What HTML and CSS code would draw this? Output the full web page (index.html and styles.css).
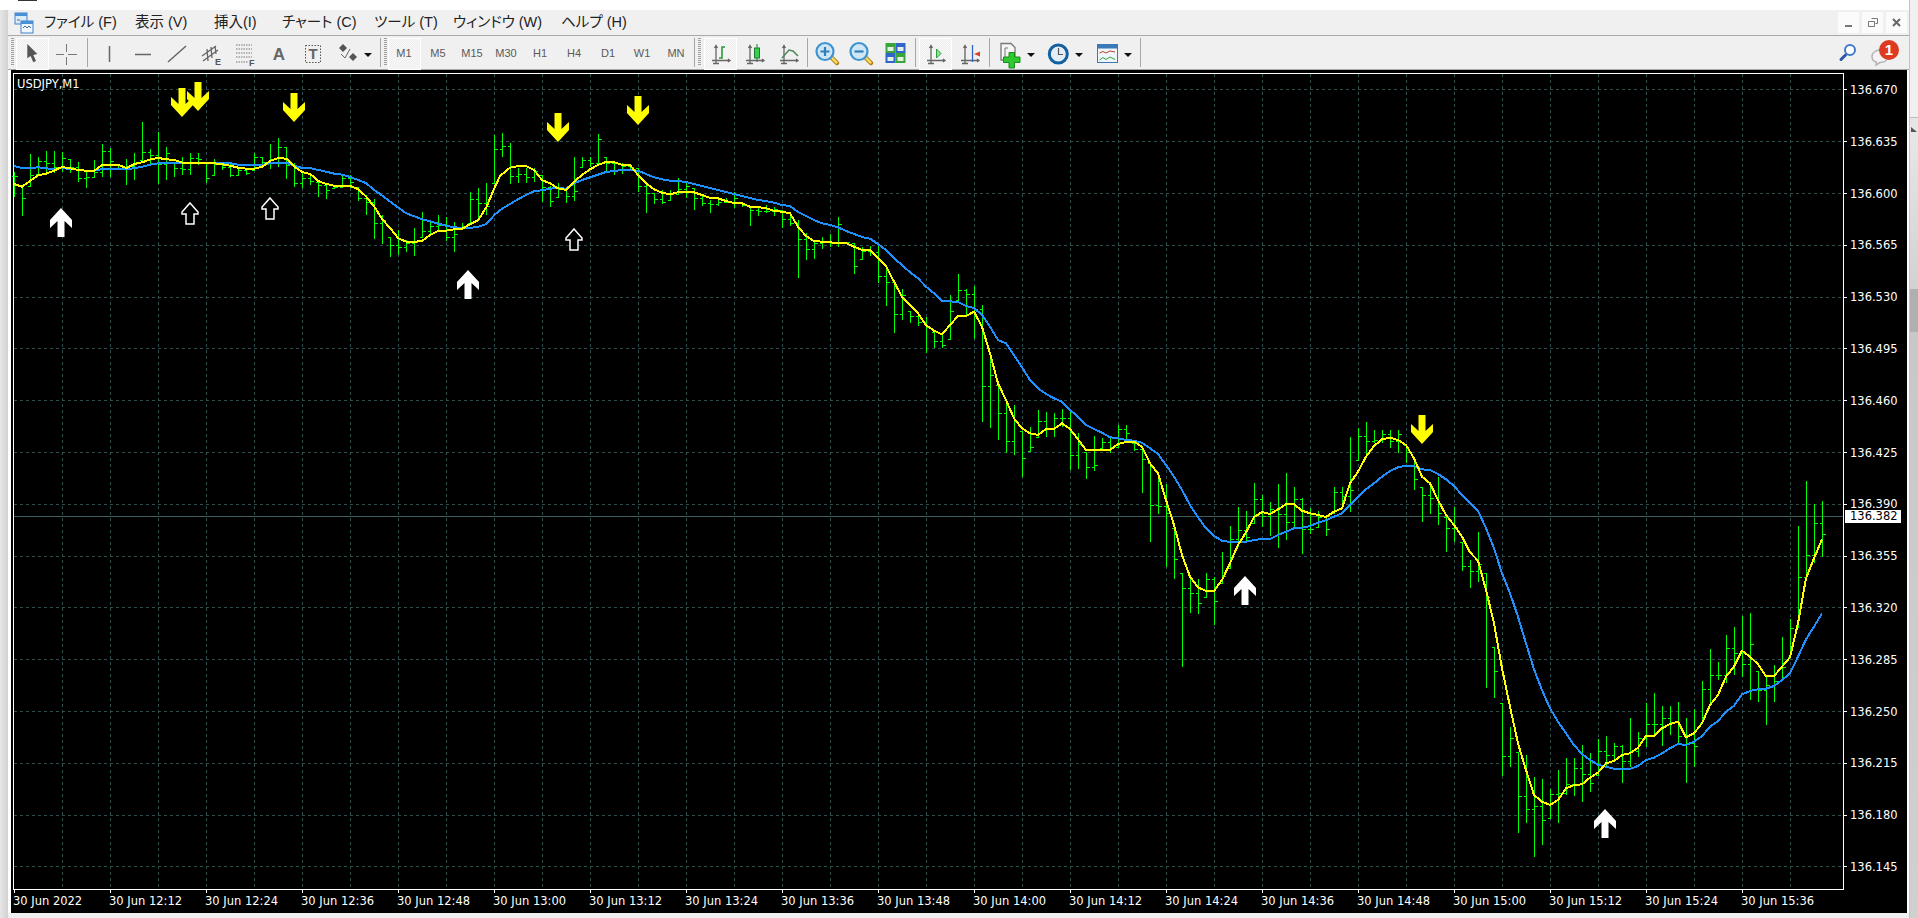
FILE: index.html
```html
<!DOCTYPE html>
<html lang="ja">
<head>
<meta charset="utf-8">
<title>USDJPY,M1</title>
<link rel="stylesheet" href="styles.css">
</head>
<body>
<svg class="defs" width="0" height="0">
  <symbol id="axes" viewBox="0 0 34 30">
    <path d="M13 8V25M9 22.5H27M11.5 10L13 7.5L14.5 10M25 21L27 22.5L25 24M10 25.5h6" fill="none" stroke="#666" stroke-width="1.3"/>
  </symbol>
  <symbol id="lens" viewBox="0 0 34 30">
    <path d="M21 19L27 25" stroke="#a87a10" stroke-width="4.5" stroke-linecap="round"/>
    <path d="M21.500 19.500L26.500 24.500" stroke="#f6d860" stroke-width="2.500" stroke-linecap="round"/>
    <circle cx="15" cy="13.500" r="8.500" fill="#cfe6f6" stroke="#3d93cf" stroke-width="2.200"/>
  </symbol>
</svg>
<div class="app">
  <div class="side-left"></div>
  <div class="main">
    <div class="titlebar"><span class="title-mark"></span></div>
    <div class="menubar">
      <svg class="app-icon" width="20" height="22" viewBox="0 0 20 22">
        <rect x="1" y="1" width="12" height="11" fill="#dcebf8" stroke="#3f83c9"/>
        <rect x="1" y="1" width="12" height="3" fill="#4a90d6"/>
        <rect x="7" y="9" width="12" height="12" fill="#eef5fb" stroke="#3f83c9"/>
        <rect x="7" y="9" width="12" height="3" fill="#4a90d6"/>
        <path d="M3 8h3M9 16l2-2 2 2 2-2 2 2" fill="none" stroke="#4a6f96"/>
      </svg>
      <nav class="menu">
        <span>ファイル (F)</span><span>表示 (V)</span><span>挿入(I)</span><span>チャート (C)</span><span>ツール (T)</span><span>ウィンドウ (W)</span><span>ヘルプ (H)</span>
      </nav>
      <div class="win-btns">
        <span class="win-btn"><svg width="21" height="21" viewBox="0 0 21 21"><rect x="7" y="13" width="7" height="2" fill="#777"/></svg></span>
        <span class="win-btn"><svg width="21" height="21" viewBox="0 0 21 21"><path d="M9.500 6.500h6v5h-2M6.500 9.500h6v5h-6z" fill="none" stroke="#777"/></svg></span>
        <span class="win-btn"><svg width="21" height="21" viewBox="0 0 21 21"><path d="M7 7l7 7M14 7l-7 7" fill="none" stroke="#666" stroke-width="2"/></svg></span>
      </div>
    </div>
    <div class="toolbar">
      <span class="grip ml-3 mr-1"></span>
      <span class="btn active"><svg width="34" height="30" viewBox="0 0 34 30"><path d="M12.300 6V20.300L15.600 18L18.300 24.300L21 23L18.300 17L22.300 16Z" fill="#555"/></svg></span>
      <span class="btn"><svg width="34" height="30" viewBox="0 0 34 30"><path d="M7 16.500H15M19 16.500H28M17.500 6V14M17.500 19V27" stroke="#777" fill="none"/></svg></span>
      <span class="sep ml-4 mr-4"></span>
      <span class="btn"><svg width="34" height="30" viewBox="0 0 34 30"><path d="M17.500 8V24" stroke="#666" stroke-width="1.500"/></svg></span>
      <span class="btn"><svg width="34" height="30" viewBox="0 0 34 30"><path d="M9 16.500H25" stroke="#666" stroke-width="1.500"/></svg></span>
      <span class="btn"><svg width="34" height="30" viewBox="0 0 34 30"><path d="M8 24L26 8" stroke="#666" stroke-width="1.500"/></svg></span>
      <span class="btn"><svg width="34" height="30" viewBox="0 0 34 30"><path d="M8 18L22 8M9 23L24 12M13 11L14 23M17 9L18 20M21 8L22 16" stroke="#666" fill="none" stroke-width="1.300"/><text x="21" y="27" class="ic-letter">E</text></svg></span>
      <span class="btn"><svg width="34" height="30" viewBox="0 0 34 30"><path d="M8 7H24M8 11H24M8 15H24M8 19H24M8 24H20" stroke="#777" stroke-dasharray="1.500 1" fill="none"/><text x="21" y="28" class="ic-letter">F</text></svg></span>
      <span class="btn"><svg width="34" height="30" viewBox="0 0 34 30"><text x="17" y="22" class="ic-a">A</text></svg></span>
      <span class="btn"><svg width="34" height="30" viewBox="0 0 34 30"><rect x="9.500" y="7.500" width="15" height="17" fill="none" stroke="#555" stroke-dasharray="1.500 1.500"/><text x="17" y="21" class="ic-t">T</text></svg></span>
      <span class="btn"><svg width="34" height="30" viewBox="0 0 34 30"><path d="M13 6L17 10L13 14L9 10ZM23 15L27 19L23 23L19 19Z" fill="#555"/><path d="M11 16L15 20L20 11" fill="none" stroke="#666"/></svg></span>
      <span class="drop"></span>
      <span class="sep ml-8"></span>
      <span class="grip ml-3"></span>
      <span class="btn tf active">M1</span><span class="btn tf">M5</span><span class="btn tf">M15</span><span class="btn tf">M30</span><span class="btn tf">H1</span><span class="btn tf">H4</span><span class="btn tf">D1</span><span class="btn tf">W1</span><span class="btn tf">MN</span>
      <span class="sep ml-1"></span>
      <span class="grip ml-3 mr-2"></span>
      <span class="btn active"><svg width="34" height="30" viewBox="0 0 34 30"><use href="#axes"/><path d="M22 9H19V20H16" fill="none" stroke="#2f9a3a" stroke-width="1.600"/></svg></span>
      <span class="btn"><svg width="34" height="30" viewBox="0 0 34 30"><use href="#axes"/><path d="M20 6V24" stroke="#2a6a3a"/><rect x="17.500" y="10" width="5" height="10" fill="#34d24a" stroke="#1e7a35"/></svg></span>
      <span class="btn"><svg width="34" height="30" viewBox="0 0 34 30"><use href="#axes"/><path d="M11 20L18 12L22 13L27 18" fill="none" stroke="#4a8a5a" stroke-width="1.500"/></svg></span>
      <span class="sep ml-2 mr-2"></span>
      <span class="btn"><svg width="34" height="30" viewBox="0 0 34 30"><use href="#lens"/><path d="M10.500 13.500H19.500M15 9V18" stroke="#2f7fb8" stroke-width="2.200"/></svg></span>
      <span class="btn"><svg width="34" height="30" viewBox="0 0 34 30"><use href="#lens"/><path d="M10.500 13.500H19.500" stroke="#2f7fb8" stroke-width="2.200"/></svg></span>
      <span class="btn"><svg width="34" height="30" viewBox="0 0 34 30"><rect x="7.500" y="5" width="10" height="10" fill="#3aa53a"/><rect x="17.500" y="5" width="10" height="10" fill="#2f66c8"/><rect x="7.500" y="15" width="10" height="10" fill="#2f66c8"/><rect x="17.500" y="15" width="10" height="10" fill="#3aa53a"/><path d="M9.500 9h6v4h-6zM19.500 9h6v4h-6zM9.500 19h6v4h-6zM19.500 19h6v4h-6z" fill="#e6f2e6"/></svg></span>
      <span class="sep ml-3 mr-2"></span>
      <span class="btn active"><svg width="34" height="30" viewBox="0 0 34 30"><use href="#axes"/><path d="M18.500 11L23 15.500L18.500 20Z" fill="#8fe08f" stroke="#2f9a3a"/></svg></span>
      <span class="btn"><svg width="34" height="30" viewBox="0 0 34 30"><use href="#axes"/><path d="M20.500 7V24" stroke="#2f66c8" stroke-width="1.300"/><path d="M22 16L28 13.500V18.500Z" fill="#d8401e"/></svg></span>
      <span class="sep ml-3 mr-3"></span>
      <span class="btn"><svg width="34" height="30" viewBox="0 0 34 30"><path d="M8 5.500H18L22 9.500V22H8Z" fill="#f5f5f5" stroke="#777" stroke-width="1.300"/><path d="M12 20V10M12 10h3" stroke="#777"/><path d="M16 16.500h5.500V21H27V26.500H21.500V32H16V26.500H10.500V21H16Z" transform="translate(0 -2)" fill="#2fc82f" stroke="#1a8a1a"/></svg></span>
      <span class="drop"></span>
      <span class="btn ml-6"><svg width="34" height="30" viewBox="0 0 34 30"><circle cx="17.300" cy="16" r="9" fill="#e4eef8" stroke="#13619f" stroke-width="3"/><path d="M17.500 10V16.500H22" fill="none" stroke="#555" stroke-width="1.200"/></svg></span>
      <span class="drop"></span>
      <span class="btn ml-7"><svg width="34" height="30" viewBox="0 0 34 30"><rect x="7.500" y="6.500" width="20" height="18" fill="#eef5fb" stroke="#3a78b8"/><rect x="8" y="7" width="19" height="3.500" fill="#3a78b8"/><path d="M9.500 15L13 13.500L16 15L20 13L25 14" fill="none" stroke="#b8452a"/><path d="M9.500 22L13 19.500L16 21.500L20 19L25 21.500" fill="none" stroke="#3aa53a"/></svg></span>
      <span class="drop"></span>
      <span class="sep ml-8"></span>
      <div class="tool-right">
        <svg width="24" height="24" viewBox="0 0 24 24"><path d="M9.500 17L5 21.500" stroke="#2a55a8" stroke-width="3" stroke-linecap="round"/><circle cx="14" cy="12" r="5" fill="#fff" stroke="#3f78cc" stroke-width="2"/></svg>
        <svg class="chat" width="36" height="34" viewBox="0 0 36 34"><path d="M1 18.500C1 14.500 5 12 9 12C13 12 17 14.500 17 18.500C17 22.500 13 24.500 9 24.500L5 27L5.500 24C3 23.500 1 21.500 1 18.500Z" fill="#f4f4f4" stroke="#b4b4b4" stroke-width="1.500"/><circle cx="18" cy="12" r="10" fill="#dd3a22"/><text x="18" y="17" class="badge-num">1</text></svg>
      </div>
    </div>
    <div class="chart-wrap">
      <div class="chart">
        <svg class="plot" width="1896" height="843" viewBox="11 70 1896 843">
          <path id="grid" class="grid-line"/>
          <path id="price-line" class="price-line" d="M14 516.500H1843"/>
          <path id="bars" class="bars"/>
          <path id="blue" class="ma ma-blue"/>
          <path id="yellow" class="ma ma-yellow"/>
          <g id="arrows"></g>
          <rect class="frame" x="13.500" y="73.500" width="1830" height="816"/>
          <path id="ticks" class="axis-ticks"/>
        </svg>
        <div class="symbol">USDJPY,M1</div>
        <div class="price-axis">
          <span>136.670</span><span>136.635</span><span>136.600</span><span>136.565</span><span>136.530</span><span>136.495</span><span>136.460</span><span>136.425</span><span>136.390</span><span>136.355</span><span>136.320</span><span>136.285</span><span>136.250</span><span>136.215</span><span>136.180</span><span>136.145</span>
        </div>
        <div class="current-price">136.382</div>
        <div class="time-axis">
          <span>30 Jun 2022</span><span>30 Jun 12:12</span><span>30 Jun 12:24</span><span>30 Jun 12:36</span><span>30 Jun 12:48</span><span>30 Jun 13:00</span><span>30 Jun 13:12</span><span>30 Jun 13:24</span><span>30 Jun 13:36</span><span>30 Jun 13:48</span><span>30 Jun 14:00</span><span>30 Jun 14:12</span><span>30 Jun 14:24</span><span>30 Jun 14:36</span><span>30 Jun 14:48</span><span>30 Jun 15:00</span><span>30 Jun 15:12</span><span>30 Jun 15:24</span><span>30 Jun 15:36</span>
        </div>
      </div>
    </div>
    <div class="bottom-strip"></div>
  </div>
  <div class="side-right">
    <div class="scroll-top"></div>
    <div class="scroll-arrow"></div>
    <div class="scroll-upper"></div>
    <div class="scroll-thumb"></div>
    <div class="scroll-lower"></div>
  </div>
</div>
<script src="chart.js"></script>
</body>
</html>
```
FILE: styles.css
```css
* { box-sizing: border-box; }
html, body { margin: 0; padding: 0; }
body { width: 1918px; height: 918px; overflow: hidden; background: #f0f0f0; font-family: "Liberation Sans", sans-serif; }
.defs { position: absolute; }
.app { display: flex; width: 1918px; height: 918px; }

.side-left { flex: 0 0 8px; margin-top: 10px; background: linear-gradient(to right, #e6e6e6, #d2d2d2); }
.main { flex: 0 0 1901px; display: flex; flex-direction: column; height: 918px; }
.titlebar { height: 10px; background: #fff; margin-left: -8px; }
.title-mark { display: block; width: 19px; height: 1px; margin-left: 18px; background: #333; }

.menubar { display: flex; align-items: flex-start; height: 26px; background: #f0f0f0; border-bottom: 1px solid #a9a9a9; }
.app-icon { margin: 2px 0 0 6px; flex: none; }
.menu { display: grid; grid-template-columns: 91px 79px 68px 92px 79px 108px auto; margin-left: 10px; height: 25px; align-items: center; font: 14.5px/25px "Liberation Sans", "Noto Sans CJK JP", sans-serif; font-feature-settings: "palt"; color: #222; white-space: nowrap; }
.win-btns { display: flex; gap: 3px; margin: 2px 2px 0 auto; }
.win-btn { display: block; width: 21px; height: 21px; background: #fbfbfb; }
.win-btn svg { display: block; }

.toolbar { display: flex; align-items: flex-start; height: 34px; padding-top: 2px; background: #f0f0f0; border-bottom: 1px solid #a9a9a9; }
.grip { flex: none; width: 3px; height: 28px; background: repeating-linear-gradient(to bottom, #a0a0a0 0 1px, #f0f0f0 1px 2px); }
.sep { flex: none; width: 1px; height: 29px; background: #a6a6a6; }
.btn { flex: none; display: block; width: 34px; height: 30px; position: relative; }
.btn svg { display: block; overflow: visible; }
.btn.active::before { content: ""; position: absolute; left: 1px; top: 0; width: 31px; height: 30px; border: 1px solid #fff; background: repeating-conic-gradient(#f7f7f7 0 25%, #efefef 0 50%) 0 0 / 2px 2px; z-index: 0; }
.btn.active svg { position: relative; z-index: 1; }
.tf { font: 11px/30px "Liberation Sans", sans-serif; color: #5a5a5a; text-align: center; }
.tf.active { isolation: isolate; }
.tf.active::before { z-index: -1; }
.drop { flex: none; width: 8px; height: 4px; margin-top: 15px; border-top: 4px solid #111; border-left: 4px solid transparent; border-right: 4px solid transparent; }
.tool-right { display: flex; align-items: flex-start; gap: 11px; margin-left: auto; margin-right: 2px; }
.chat { overflow: visible; }
.ic-letter { font: bold 9px "Liberation Sans", sans-serif; fill: #555; }
.ic-a { font: bold 17px "Liberation Sans", sans-serif; fill: #666; text-anchor: middle; }
.ic-t { font: bold 15px "Liberation Sans", sans-serif; fill: #666; text-anchor: middle; }
.badge-num { font: bold 15px "Liberation Sans", sans-serif; fill: #fff; text-anchor: middle; }

.ml-1 { margin-left: 1px; } .ml-2 { margin-left: 2px; } .ml-3 { margin-left: 3px; } .ml-4 { margin-left: 4px; } .ml-6 { margin-left: 6px; } .ml-7 { margin-left: 7px; } .ml-8 { margin-left: 8px; }
.mr-1 { margin-right: 1px; } .mr-2 { margin-right: 2px; } .mr-3 { margin-right: 3px; } .mr-4 { margin-right: 4px; }

.chart-wrap { height: 843px; padding: 0 2px 0 3px; background: #fff; }
.chart { position: relative; height: 843px; width: 1896px; background: #000; display: flex; flex-direction: column; color: #fff; font: 11.5px/14px "DejaVu Sans", sans-serif; }
.plot { position: absolute; left: 0; top: 0; }
.grid-line { stroke: #2f4f4f; stroke-dasharray: 3 3; fill: none; shape-rendering: crispEdges; }
.price-line { stroke: #3f5f5f; fill: none; shape-rendering: crispEdges; }
.bars { stroke: #00ff00; fill: none; shape-rendering: crispEdges; }
.ma { fill: none; stroke-width: 2; stroke-linejoin: round; shape-rendering: crispEdges; }
.ma-blue { stroke: #1e90ff; }
.ma-yellow { stroke: #ffff00; }
.frame { fill: none; stroke: #fff; shape-rendering: crispEdges; }
.axis-ticks { stroke: #fff; fill: none; shape-rendering: crispEdges; }
.arrow-white { fill: #fff; }
.arrow-yellow { fill: #ffff00; }
.arrow-hollow { fill: #000; stroke: #fff; stroke-width: 1.500; }

.symbol { position: absolute; left: 6px; top: 7px; }
.price-axis { position: relative; display: flex; flex-direction: column; justify-content: space-between; height: 791px; margin: 13px 0 20px 1839px; }
.price-axis span { display: block; height: 14px; }
.current-price { position: absolute; left: 1834px; top: 440px; width: 56px; height: 13px; padding-left: 5px; background: #fff; color: #000; line-height: 13px; }
.time-axis { position: relative; display: flex; height: 14px; padding-left: 2px; white-space: nowrap; }
.time-axis span { flex: 0 0 96px; }
.bottom-strip { height: 5px; background: #f0f0f0; }

.side-right { flex: 0 0 9px; display: flex; flex-direction: column; height: 918px; border-left: 1px solid #c4c4c4; background: #ececec; }
.scroll-top { height: 118px; border-bottom: 1px solid #bdbdbd; background: #f0f0f0; }
.scroll-arrow { height: 20px; background: #e6e6e6; position: relative; }
.scroll-arrow::after { content: ""; position: absolute; left: 1px; top: 9px; border-bottom: 5px solid #555; border-right: 6px solid transparent; }
.scroll-upper { height: 151px; background: linear-gradient(to bottom, #e6e6e6, #d2d2d2); }
.scroll-thumb { height: 43px; background: #b0b0b0; }
.scroll-lower { flex: 1; background: linear-gradient(to bottom, #c8c8c8, #d0d0d0); }
```
FILE: chart.js
```js
(function () {
  var groups = [
    { y0: 100, bars: [[215,290],[255,347],[162,257],[172,222],[153,225],[152,220],[155,215],[178,220],[186,245],[210,263],[181,235],[132,232],[143,232],[192,210],[178,254],[158,240],[67,180],[146,195],[97,253],[140,240],[185,232],[170,225],[160,224],[158,195],[188,250],[178,224],[185,210],[190,232],[200,225],[205,225],[158,210],[170,200],[133,208],[115,200],[142,236],[190,262],[215,263],[220,255],[245,290],[250,298],[255,265],[225,265],[225,265],[262,302],[285,345],[298,418],[345,432],[410,472],[390,465],[420,455],[385,467],[335,412],[365,405],[345,395],[350,423],[365,455],[370,385],[275,370],[265,360],[250,345],[105,250]] },
    { y0: 100, bars: [[100,172],[130,252],[205,250],[205,250],[205,245],[225,305],[258,320],[250,292],[265,308],[172,303],[170,202],[170,200],[102,190],[170,215],[182,225],[190,222],[192,210],[205,275],[252,338],[280,312],[270,312],[270,300],[235,285],[250,295],[265,330],[285,318],[300,338],[290,318],[295,310],[275,325],[305,320],[318,378],[325,348],[315,340],[320,348],[330,384],[340,378],[360,533],[400,480],[420,476],[412,448],[403,442],[352,442],[425,430],[430,522],[440,478],[438,468],[430,550],[500,618],[540,700],[568,660],[632,668],[640,678],[650,760],[695,745],[700,745],[585,718],[522,600],[568,650],[558,718],[615,966],[770,984],[855,1020]] },
    { y0: 380, bars: [[65,218],[75,226],[152,290],[140,212],[90,170],[97,170],[100,170],[88,140],[95,270],[160,266],[215,298],[168,272],[175,205],[170,218],[135,205],[135,190],[188,212],[200,338],[250,485],[295,402],[312,560],[445,597],[580,860],[595,698],[598,702],[580,652],[590,735],[515,610],[438,565],[382,500],[392,485],[310,430],[345,440],[365,468],[312,505],[280,480],[320,440],[355,522],[385,462],[393,440],[410,467],[322,400],[320,385],[172,395],[145,240],[127,235],[150,190],[150,190],[150,205],[150,218],[195,250],[230,330],[320,425],[310,403],[292,435],[410,515]] },
    { y0: 460, bars: [[140,245],[245,333],[300,383],[215,365],[338,683],[562,715],[730,948],[800,920],[875,1118],[885,1088],[950,1190],[957,1155],[988,1075],[930,1090],[895,1005],[895,1008],[855,1025],[880,995],[837,945],[828,925],[850,905],[855,968],[775,922],[816,890],[730,860],[700,825],[738,858],[738,825],[725,850],[775,970],[747,920],[663,790],[567,738],[605,660],[525,670],[502,645],[467,650],[460,720],[632,725],[650,795],[615,725],[532,660],[478,590],[198,500],[63,355],[132,310],[123,292]] }
  ];

  var yellow = [
    { x0: 0, y0: 100, p: [42,252,66,260,90,243,114,226,138,221,162,212,186,201,210,205,234,210,258,212,283,212,307,194,331,194,355,194,379,204,403,192,427,187,451,178,475,174,499,178,523,180,547,188,571,188,595,188,619,190,643,190,667,193,691,197,715,203,739,206,763,206,787,200,811,182,835,174,859,176,883,200,907,216,931,222,955,243,979,252,1003,257,1027,258,1051,258,1075,268,1099,290,1123,320,1147,358,1171,385,1195,415,1219,425,1243,426,1267,422,1291,405,1315,392,1339,392,1363,388,1387,386,1411,372,1435,360,1459,322,1483,265] },
    { x0: 500, y0: 100, p: [0,228,30,203,54,198,78,198,102,210,126,240,150,250,174,265,198,270,222,245,246,225,270,208,294,195,318,186,342,187,366,194,390,195,414,225,438,250,462,268,486,278,510,283,534,277,558,275,582,277,606,285,630,294,654,295,678,303,702,309,726,310,750,320,774,321,798,325,822,332,846,335,870,340,894,380,918,408,942,423,966,425,990,427,1014,429,1038,429,1062,440,1086,450,1110,450,1134,475,1158,498,1182,545,1206,590,1230,615,1254,640,1278,675,1302,692,1326,703,1350,675,1374,648,1398,648,1422,635,1446,680,1470,760,1494,850] },
    { x0: 1000, y0: 380, p: [18,60,42,115,66,145,90,160,114,165,138,147,162,147,186,130,210,147,234,178,258,210,282,210,306,210,330,210,354,192,378,186,402,185,426,200,450,250,474,280,498,360,522,435,546,525,570,590,594,622,618,633,642,633,666,600,690,550,714,495,738,457,762,412,786,396,810,402,834,388,858,373,882,373,906,392,930,400,954,405,978,411,1002,395,1026,385,1050,310,1074,275,1098,230,1122,198,1146,178,1170,173,1194,180,1218,195,1242,235,1266,290,1290,310,1314,360,1338,405,1362,435,1386,470,1410,517,1434,542] },
    { x0: 1450, y0: 460, p: [108,390,132,490,156,625,180,740,204,850,228,930,252,1005,276,1025,300,1035,324,1020,348,985,372,975,396,973,420,953,444,938,468,910,492,903,516,885,540,880,564,863,588,827,612,827,636,805,660,792,684,785,708,832,732,820,756,790,780,735,804,705,828,650,852,620,876,572,900,590,924,613,948,648,972,648,996,620,1020,592,1044,490,1068,355,1092,295,1116,238] }
  ];

  var blue = [
    { x0: 0, y0: 100, p: [42,198,66,204,90,204,114,202,138,205,162,208,186,204,210,207,234,209,258,212,283,212,307,207,331,207,355,207,379,207,403,205,427,200,451,194,475,190,499,188,523,188,547,188,571,188,595,188,619,188,643,188,667,188,691,190,715,194,739,195,763,195,787,195,811,190,835,188,859,188,883,197,907,204,931,204,955,210,979,215,1003,221,1027,224,1051,231,1075,240,1099,250,1123,270,1147,287,1171,305,1195,323,1219,340,1243,349,1267,358,1291,364,1315,371,1339,377,1363,382,1387,384,1411,384,1435,380,1459,372,1483,345] },
    { x0: 500, y0: 100, p: [0,330,30,312,54,298,78,285,102,274,126,271,150,266,174,264,198,266,222,250,246,240,270,232,294,224,318,216,342,213,366,210,390,209,414,212,438,222,462,232,486,238,510,242,534,243,558,246,582,252,606,258,630,264,654,270,678,276,702,282,726,288,750,294,774,300,798,303,822,308,846,315,870,318,894,336,918,348,942,360,966,370,990,375,1014,382,1038,393,1062,402,1086,411,1110,416,1134,432,1158,450,1182,475,1206,495,1230,517,1254,535,1278,560,1302,580,1326,602,1350,604,1374,606,1398,618,1422,624,1446,645,1470,680,1494,720] },
    { x0: 1000, y0: 380, p: [18,-110,42,-75,66,-38,90,0,114,25,138,42,162,55,186,65,210,90,234,110,258,135,282,147,306,158,330,172,354,175,378,180,402,182,426,188,450,205,474,222,498,255,522,290,546,330,570,375,594,412,618,445,642,468,666,482,690,486,714,486,738,485,762,480,786,477,810,477,834,465,858,455,882,445,906,443,930,438,954,428,978,421,1002,410,1026,400,1050,375,1074,350,1098,328,1122,310,1146,290,1170,273,1194,262,1218,257,1242,258,1266,268,1290,270,1314,282,1338,298,1362,318,1386,345,1410,370,1434,392] },
    { x0: 1450, y0: 460, p: [108,205,132,265,156,340,180,400,204,470,228,550,252,628,276,690,300,745,324,785,348,820,372,855,396,882,420,900,444,914,468,920,492,926,516,927,540,927,564,918,588,900,612,893,636,880,660,865,684,852,708,855,732,845,756,828,780,800,804,783,828,755,852,737,876,703,900,693,924,688,948,686,972,678,996,660,1020,640,1044,590,1068,538,1092,500,1116,460] }
  ];

  function fix(n) { return Math.round(n * 10) / 10; }

  function linePath(segments) {
    var pts = [];
    segments.forEach(function (s) {
      for (var i = 0; i < s.p.length; i += 2) {
        pts.push(fix(s.x0 + s.p[i] / 3) + " " + fix(s.y0 + s.p[i + 1] / 3));
      }
    });
    return "M" + pts.join("L");
  }

  // Bars: one per minute, 8px apart. Open tick on the left, close tick on the right.
  var d = [], k = 0, prevClose = null;
  groups.forEach(function (g) {
    g.bars.forEach(function (b) {
      var x = 14 + 8 * k + 0.5;
      var hi = Math.round(g.y0 + b[0] / 3), lo = Math.round(g.y0 + b[1] / 3);
      var f = 0.15 + ((k * 37) % 100) / 100 * 0.7;
      var close = Math.round(hi + (lo - hi) * f);
      var open = prevClose === null ? close : Math.min(lo, Math.max(hi, prevClose));
      d.push("M" + x + " " + hi + "V" + lo);
      d.push("M" + (x - 2.5) + " " + (open + 0.5) + "h2.5");
      d.push("M" + x + " " + (close + 0.5) + "h3");
      prevClose = close;
      k++;
    });
  });
  document.getElementById("bars").setAttribute("d", d.join(""));
  document.getElementById("yellow").setAttribute("d", linePath(yellow));
  document.getElementById("blue").setAttribute("d", linePath(blue));

  // Grid and axis ticks
  var hs = [89, 141, 193, 245, 297, 348, 400, 452, 504, 556, 607, 659, 711, 763, 815, 866];
  var gridD = [], tickD = [];
  hs.forEach(function (y) {
    gridD.push("M14 " + (y + 0.5) + "H1843");
    tickD.push("M1844 " + (y + 0.5) + "h3");
  });
  for (var i = 1; i <= 37; i++) {
    gridD.push("M" + (14 + 48 * i + 0.5) + " 74V889");
  }
  for (var j = 0; j <= 18; j++) {
    tickD.push("M" + (14 + 96 * j + 0.5) + " 890v3");
  }
  document.getElementById("grid").setAttribute("d", gridD.join(""));
  document.getElementById("ticks").setAttribute("d", tickD.join(""));

  // Signal arrows
  var NS = "http://www.w3.org/2000/svg";
  var box = document.getElementById("arrows");
  function poly(points, cls, tx, ty) {
    var el = document.createElementNS(NS, "polygon");
    el.setAttribute("points", points);
    el.setAttribute("class", cls);
    el.setAttribute("transform", "translate(" + tx + " " + ty + ")");
    box.appendChild(el);
  }
  var DOWN = "-3.5,0 3.5,0 3.5,16 11,9 11,17 0,29 -11,17 -11,9 -3.5,16";
  var UP = "0,0 11,12 11,20 3.5,13 3.5,29 -3.5,29 -3.5,13 -11,20 -11,12";
  var HOLLOW = "0,0 8,9 8,11 4,11 4,21 -4,21 -4,11 -8,11 -8,9";
  [[182, 88], [198, 82], [294, 93], [558, 113], [638, 96], [1422, 415]].forEach(function (a) {
    poly(DOWN, "arrow-yellow", a[0], a[1]);
  });
  [[61, 208], [468, 270], [1245, 576], [1605, 809]].forEach(function (a) {
    poly(UP, "arrow-white", a[0], a[1]);
  });
  [[190, 203], [270, 198], [574, 229]].forEach(function (a) {
    poly(HOLLOW, "arrow-hollow", a[0], a[1]);
  });
})();
```
